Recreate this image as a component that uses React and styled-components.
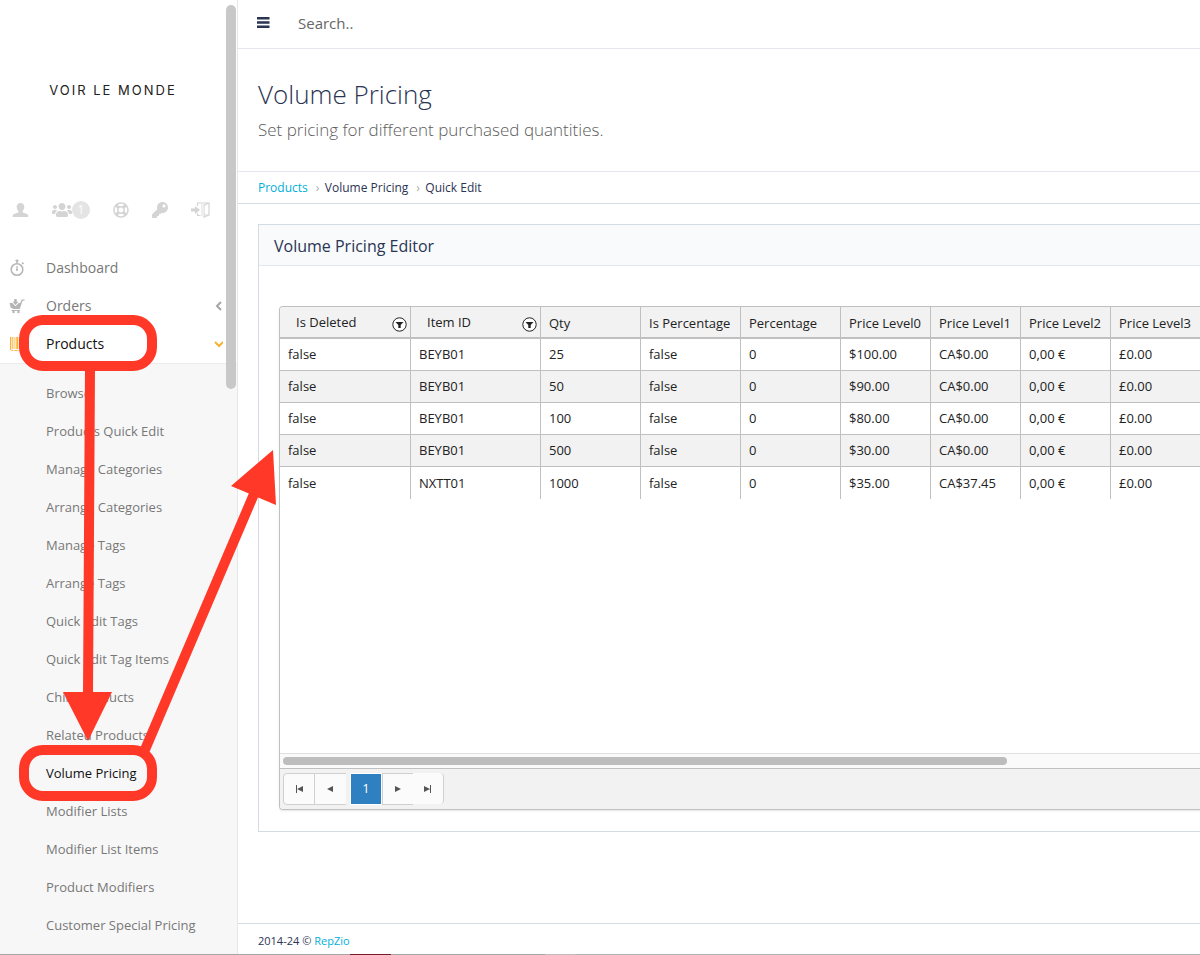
import React from 'react';
import styled, { createGlobalStyle } from 'styled-components';
import { FaUsers, FaRegLifeRing, FaKey } from 'react-icons/fa';

const GlobalStyle = createGlobalStyle`
    * {
        box-sizing: border-box;
    }
    body {
        margin: 0;
        background: #ffffff;
        color: #2b3453;
        font-family: "Open Sans", sans-serif;
        font-size: 13px;
    }
    a {
        text-decoration: none;
    }
    ul, ol {
        list-style: none;
        margin: 0;
        padding: 0;
    }
`;

const Page = styled.div`
    position: relative;
    display: grid;
    grid-template-columns: 238px minmax(0, 1fr);
    grid-template-rows: 1fr 1px;
    min-height: 100vh;
    overflow: hidden;
`;

const BottomStrip = styled.div`
    grid-column: 1 / -1;
    background: linear-gradient(to right, #a6a6a6 350px, #7d1a2c 350px 391px, #a6a6a6 391px 545px, #c4b9bb 545px 575px, #b3b3b3 575px);
`;

const Sidebar = styled.aside`
    position: relative;
    display: flex;
    flex-direction: column;
    border-right: 1px solid #e6e7ea;
`;

const ScrollThumb = styled.div`
    position: absolute;
    top: 5px;
    right: 1px;
    width: 10px;
    height: 384px;
    border-radius: 5px;
    background: #c8c8c8;
`;

const Logo = styled.div`
    height: 180px;
    width: 226px;
    display: flex;
    align-items: center;
    justify-content: center;
    font-family: Inter, sans-serif;
    font-size: 13px;
    letter-spacing: 2px;
    color: #222222;
`;

const QuickLinks = styled.nav`
    height: 69px;
    width: 226px;
    padding: 0 16px 10px 12px;
    display: flex;
    align-items: center;
    justify-content: space-between;
`;

const QuickLink = styled.a`
    display: flex;
    align-items: center;
    color: #d4d4d4;
`;

const Badge = styled.span`
    width: 18px;
    height: 18px;
    border-radius: 9px;
    background: #e4e4e4;
    color: #ffffff;
    font-size: 12px;
    line-height: 18px;
    text-align: center;
`;

const MenuLink = styled.a`
    height: 38px;
    padding: 0 14px 0 9px;
    display: flex;
    align-items: center;
    font-size: 14px;
    color: ${({current}) => current ? "#111111" : "#777777"};
`;

const MenuIcon = styled.span`
    width: 37px;
    display: flex;
    color: ${({current}) => current ? "#f9b233" : "#b5b5b5"};
`;

const MenuText = styled.span`
    flex: 1;
    padding-bottom: 2px;
`;

const SubMenu = styled.ul`
    flex: 1;
    padding-top: 10px;
    border-top: 1px solid #ebebeb;
    background: #f7f7f7;
`;

const SubLink = styled.a`
    height: 38px;
    padding-left: 46px;
    display: flex;
    align-items: center;
    font-size: 13px;
    color: ${({current}) => current ? "#111111" : "#777777"};
`;

const Main = styled.main`
    display: flex;
    flex-direction: column;
`;

const TopBar = styled.header`
    height: 49px;
    padding: 0 19px 2px;
    display: flex;
    align-items: center;
    gap: 27px;
    border-bottom: 1px solid #e4e8ee;
`;

const MenuButton = styled.button`
    padding: 0;
    border: 0;
    background: none;
    display: flex;
    color: #2b3453;
`;

const SearchInput = styled.input`
    flex: 1;
    padding: 0;
    border: 0;
    outline: 0;
    background: none;
    font: 15px "Open Sans", sans-serif;
    color: #666666;
    &::placeholder {
        color: #666666;
        opacity: 1;
    }
`;

const PageHead = styled.section`
    height: 123px;
    padding: 26px 20px 0;
    border-bottom: 1px solid #e4e8ee;
`;

const PageTitle = styled.h1`
    margin: 0;
    font-size: 26px;
    font-weight: 300;
    line-height: 38px;
    color: #2b3453;
`;

const PageText = styled.p`
    margin: 0;
    font-size: 17px;
    font-weight: 300;
    line-height: 34px;
    color: #5c5c5c;
`;

const Breadcrumb = styled.ol`
    height: 32px;
    padding: 0 20px;
    display: flex;
    align-items: center;
    font-size: 12px;
    border-bottom: 1px solid #d3dce3;
`;

const Crumb = styled.li`
    display: flex;
    & + &::before {
        content: "›";
        width: 9px;
        padding-left: 8px;
        color: #aaaaaa;
    }
`;

const Anchor = styled.a`
    color: #00b0d8;
`;

const Content = styled.div`
    flex: 1;
    padding: 20px 0 20px 20px;
`;

const Panel = styled.section`
    border: 1px solid #d3dce3;
    border-right: 0;
`;

const PanelTitle = styled.h2`
    margin: 0;
    height: 41px;
    padding: 2px 15px 0;
    display: flex;
    align-items: center;
    font-size: 16px;
    font-weight: 400;
    background: #f8fafc;
    border-bottom: 1px solid #e4e8ee;
`;

const PanelBody = styled.div`
    padding: 40px 0 21px 20px;
`;

const Grid = styled.div`
    overflow: hidden;
    border: 1px solid #c0c0c0;
    border-right: 0;
    border-radius: 4px 0 0 4px;
    box-shadow: 0 1px 2px #e6e6e6;
`;

const GridView = styled.div`
    height: 446px;
    overflow: hidden;
`;

const Table = styled.table`
    width: 100%;
    min-width: 920px;
    table-layout: fixed;
    border-collapse: separate;
    border-spacing: 0;
    color: #222222;
`;

const Th = styled.th`
    width: ${({size}) => size};
    height: 32px;
    padding: ${({filter}) => filter ? "0 3px 0 16px" : "2px 0 0 8px"};
    text-align: left;
    font-weight: 400;
    white-space: nowrap;
    background: #f2f2f2;
    border-left: 1px solid #c0c0c0;
    border-bottom: 2px solid #c0c0c0;
    &:first-child {
        border-left: 0;
    }
`;

const ThInner = styled.div`
    display: flex;
    align-items: center;
    justify-content: space-between;
`;

const FilterButton = styled.button`
    margin-top: 4px;
    padding: 0;
    border: 0;
    background: none;
    display: flex;
    color: #222222;
`;

const Tr = styled.tr`
    &:nth-child(even) {
        background: #f2f2f2;
    }
    &:last-child td {
        padding-bottom: 0;
        border-bottom: 0;
    }
`;

const Td = styled.td`
    height: 32px;
    padding: 0 8px 2px;
    border-left: 1px solid #c0c0c0;
    border-bottom: 1px solid #c0c0c0;
    &:first-child {
        border-left: 0;
    }
`;

const ScrollTrack = styled.div`
    height: 15px;
    padding: 3px 0 3px 3px;
    border-top: 1px solid #e0e0e0;
    background: #fafafa;
`;

const TrackThumb = styled.div`
    width: 79%;
    height: 8px;
    border-radius: 4px;
    background: #bdbdbd;
`;

const Pager = styled.nav`
    height: 41px;
    padding: 4px 3px;
    display: flex;
    align-items: flex-start;
    border-top: 1px solid #c0c0c0;
    background: #f2f2f2;
`;

const PagerButton = styled.button`
    width: ${({edge}) => edge === "first" ? "32px" : "31px"};
    height: ${({edge}) => edge === "last" ? "31px" : "32px"};
    padding: 0;
    display: flex;
    align-items: center;
    justify-content: center;
    color: #555555;
    background: #fbfbfb;
    border: 1px solid #d0d0d0;
    border-width: ${({edge, side}) => edge === "last" ? "0 1px 0 0" : side === "back" ? "1px 0 1px 0" : "1px 0 1px 1px"};
    border-right-width: ${({edge}) => edge ? "1px" : "0"};
    border-radius: ${({edge}) => edge === "first" ? "4px 0 0 4px" : edge === "last" ? "0 4px 4px 0" : "0"};
`;

const CurrentPage = styled.button`
    width: 32px;
    height: 32px;
    margin-left: 4px;
    padding: 0 0 2px;
    color: #ffffff;
    font: 13px "Open Sans", sans-serif;
    background: #2e80c0;
    border: 1px solid #ffffff;
`;

const Footer = styled.footer`
    height: 31px;
    padding: 2px 20px 0;
    display: flex;
    align-items: center;
    gap: 3px;
    font-size: 11px;
    border-top: 1px solid #d3dce3;
`;

const Markup = styled.svg`
    position: absolute;
    top: 0;
    left: 0;
    pointer-events: none;
`;

const subItems = [
    "Browse", "Products Quick Edit", "Manage Categories", "Arrange Categories",
    "Manage Tags", "Arrange Tags", "Quick Edit Tags", "Quick Edit Tag Items",
    "Child Products", "Related Products", "Volume Pricing", "Modifier Lists",
    "Modifier List Items", "Product Modifiers", "Customer Special Pricing",
];

const columns = [
    { name: "Is Deleted", size: "130px", filter: true },
    { name: "Item ID", size: "130px", filter: true },
    { name: "Qty", size: "100px" },
    { name: "Is Percentage", size: "100px" },
    { name: "Percentage", size: "100px" },
    { name: "Price Level0", size: "90px" },
    { name: "Price Level1", size: "90px" },
    { name: "Price Level2", size: "90px" },
    { name: "Price Level3", size: "auto" },
];

const rows = [
    ["false", "BEYB01", "25", "false", "0", "$100.00", "CA$0.00", "0,00 €", "£0.00"],
    ["false", "BEYB01", "50", "false", "0", "$90.00", "CA$0.00", "0,00 €", "£0.00"],
    ["false", "BEYB01", "100", "false", "0", "$80.00", "CA$0.00", "0,00 €", "£0.00"],
    ["false", "BEYB01", "500", "false", "0", "$30.00", "CA$0.00", "0,00 €", "£0.00"],
    ["false", "NXTT01", "1000", "false", "0", "$35.00", "CA$37.45", "0,00 €", "£0.00"],
];

const UserIcon = () => (
    <svg width="17" height="16" viewBox="0 0 17 16" fill="currentColor">
        <path d="M8.500 1C6 1 4.600 2.700 4.700 5c.1 1.600.8 3 1.700 3.900.3.900 0 1.600-.9 1.900L2 12c-1 .4-1.300 1.300-1.300 3h15.600c0-1.700-.3-2.600-1.300-3l-3.500-1.200c-.9-.3-1.200-1-.9-1.900.9-.9 1.600-2.300 1.700-3.900C12.400 2.700 11 1 8.500 1z" />
    </svg>
);

const ExitIcon = () => (
    <svg width="19" height="16" viewBox="0 0 19 16" fill="none" stroke="currentColor">
        <path d="M6.500 4V1h11.500v12H13.500M6.500 11v2.500h3" strokeWidth="1.200" />
        <path d="M17.800 1L13 3.200v12l4.800-2.200" strokeWidth="1.200" />
        <path d="M10 1.500l3 1.700v12l-3-1.700z" fill="#eeeeee" stroke="none" />
        <path d="M0 6.500h4V4l5 4-5 4V9.500H0z" fill="currentColor" stroke="none" />
    </svg>
);

const StopwatchIcon = () => (
    <svg width="16" height="18" viewBox="0 0 16 18" fill="none" stroke="currentColor">
        <circle cx="8" cy="10.500" r="5.800" strokeWidth="1.500" />
        <path d="M6.500 1.500h3M8 2v2M13 3.500l1.500 1.500" strokeWidth="1.500" />
        <path d="M8 7v4" strokeWidth="1.200" />
        <circle cx="8" cy="11" r="1" fill="currentColor" stroke="none" />
    </svg>
);

const CartIcon = () => (
    <svg width="16" height="16" viewBox="0 0 16 16" fill="currentColor">
        <path d="M.5 5h2.800L6.500 8.300 9.700 5h1.500L12.600 1.500h2.900v1.200h-2L10.800 11H3.500v-1H1.800z" />
        <path d="M5.300 1h2.400v2.700h1.800l-3 3.200-3-3.200h1.800z" />
        <path d="M2.500 12h8.300v1H2.500z" />
        <circle cx="4.500" cy="14" r="1.200" />
        <circle cx="9.500" cy="14" r="1.200" />
    </svg>
);

const BarcodeIcon = () => (
    <svg width="16" height="16" viewBox="0 0 16 16" fill="currentColor">
        <path d="M1 1h1.300v13H1zM3.300 1h1v12h-1zM5.500 1h.8v12h-.8zM7.300 1h2v12h-2zM10.500 1h1v12h-1zM13 1h1.500v13H13zM2.500 14h2v1h-2zM5.500 14h3v1h-3zM9.500 14h2v1h-2z" />
    </svg>
);

const FilterIcon = () => (
    <svg width="15" height="15" viewBox="0 0 15 15">
        <circle cx="7.500" cy="7.500" r="6.700" fill="#ffffff" stroke="currentColor" />
        <path d="M3.500 5h8L8.700 8v3H6.300V8z" fill="currentColor" />
    </svg>
);

const PagerIcon = ({ d }) => (
    <svg width="10" height="10" viewBox="0 0 10 10" fill="currentColor" aria-hidden="true">
        <path d={d} />
    </svg>
);

function SideBar () {
    return (
        <Sidebar>
            <Logo>VOIR LE MONDE</Logo>
            <QuickLinks>
                <QuickLink href="#" aria-label="Profile"><UserIcon /></QuickLink>
                <QuickLink href="#" aria-label="Customers"><FaUsers size={20} /><Badge>1</Badge></QuickLink>
                <QuickLink href="#" aria-label="Support"><FaRegLifeRing size={16} /></QuickLink>
                <QuickLink href="#" aria-label="Password"><FaKey size={16} /></QuickLink>
                <QuickLink href="#" aria-label="Log out"><ExitIcon /></QuickLink>
            </QuickLinks>
            <MenuLink href="#">
                <MenuIcon><StopwatchIcon /></MenuIcon>
                <MenuText>Dashboard</MenuText>
            </MenuLink>
            <MenuLink href="#">
                <MenuIcon><CartIcon /></MenuIcon>
                <MenuText>Orders</MenuText>
                <svg width="8" height="10" viewBox="0 0 8 10" fill="none" stroke="#a5a5a5" strokeWidth="2"><path d="M6 1L2 5l4 4" /></svg>
            </MenuLink>
            <MenuLink href="#" current="true">
                <MenuIcon current="true"><BarcodeIcon /></MenuIcon>
                <MenuText>Products</MenuText>
                <svg width="10" height="8" viewBox="0 0 10 8" fill="none" stroke="#f9b233" strokeWidth="2"><path d="M2 2l4 4 4-4" /></svg>
            </MenuLink>
            <SubMenu>
                {subItems.map((item) => (
                    <li key={item}>
                        <SubLink href="#" current={item === "Volume Pricing" ? "true" : undefined}>{item}</SubLink>
                    </li>
                ))}
            </SubMenu>
            <ScrollThumb />
        </Sidebar>
    );
}

function PricingGrid () {
    return (
        <Grid>
            <GridView>
                <Table>
                    <thead>
                        <tr>
                            {columns.map(({ name, size, filter }) => (
                                <Th key={name} size={size} filter={filter ? "true" : undefined}>
                                    {filter ? (
                                        <ThInner>
                                            {name}
                                            <FilterButton aria-label={`Filter ${name}`}><FilterIcon /></FilterButton>
                                        </ThInner>
                                    ) : name}
                                </Th>
                            ))}
                        </tr>
                    </thead>
                    <tbody>
                        {rows.map((row, i) => (
                            <Tr key={i}>
                                {row.map((cell, j) => <Td key={j}>{cell}</Td>)}
                            </Tr>
                        ))}
                    </tbody>
                </Table>
            </GridView>
            <ScrollTrack><TrackThumb /></ScrollTrack>
            <Pager>
                <PagerButton edge="first" aria-label="First page"><PagerIcon d="M2 1h1v8H2zM9 2v6L3 5z" /></PagerButton>
                <PagerButton side="back" aria-label="Previous page"><PagerIcon d="M7 2v6L1 5z" /></PagerButton>
                <CurrentPage>1</CurrentPage>
                <PagerButton aria-label="Next page"><PagerIcon d="M2 2v6l6-3z" /></PagerButton>
                <PagerButton edge="last" aria-label="Last page"><PagerIcon d="M7 1h1v8H7zM1 2v6l6-3z" /></PagerButton>
            </Pager>
        </Grid>
    );
}

function App () {
    return (
        <Page>
            <GlobalStyle />
            <SideBar />
            <Main>
                <TopBar>
                    <MenuButton aria-label="Toggle menu">
                        <svg width="14" height="12" viewBox="0 0 14 12" fill="currentColor">
                            <path d="M0 0h12.500v2.400H0zM0 4.300h12.500v2.400H0zM0 8.600h12.500V11H0z" />
                        </svg>
                    </MenuButton>
                    <SearchInput type="text" aria-label="Search" placeholder="Search.." />
                </TopBar>
                <PageHead>
                    <PageTitle>Volume Pricing</PageTitle>
                    <PageText>Set pricing for different purchased quantities.</PageText>
                </PageHead>
                <Breadcrumb>
                    <Crumb><Anchor href="#">Products</Anchor></Crumb>
                    <Crumb>Volume Pricing</Crumb>
                    <Crumb>Quick Edit</Crumb>
                </Breadcrumb>
                <Content>
                    <Panel>
                        <PanelTitle>Volume Pricing Editor</PanelTitle>
                        <PanelBody>
                            <PricingGrid />
                        </PanelBody>
                    </Panel>
                </Content>
                <Footer>2014-24 © <Anchor href="#">RepZio</Anchor></Footer>
            </Main>
            <BottomStrip />
            {/* Walkthrough arrows from Products to Volume Pricing to the grid */}
            <Markup width="290" height="820" viewBox="0 0 290 820" fill="none" stroke="#ff3827" strokeWidth="10">
                <rect x="24" y="320" width="128" height="46" rx="19" />
                <rect x="24" y="750" width="128" height="46" rx="19" />
                <path d="M90 368L88 695M144 752L254 494" />
                <path d="M63 692h49L88 741zM273 450l3 55-45-19z" fill="#ff3827" stroke="none" />
            </Markup>
        </Page>
    );
}

export default App;
